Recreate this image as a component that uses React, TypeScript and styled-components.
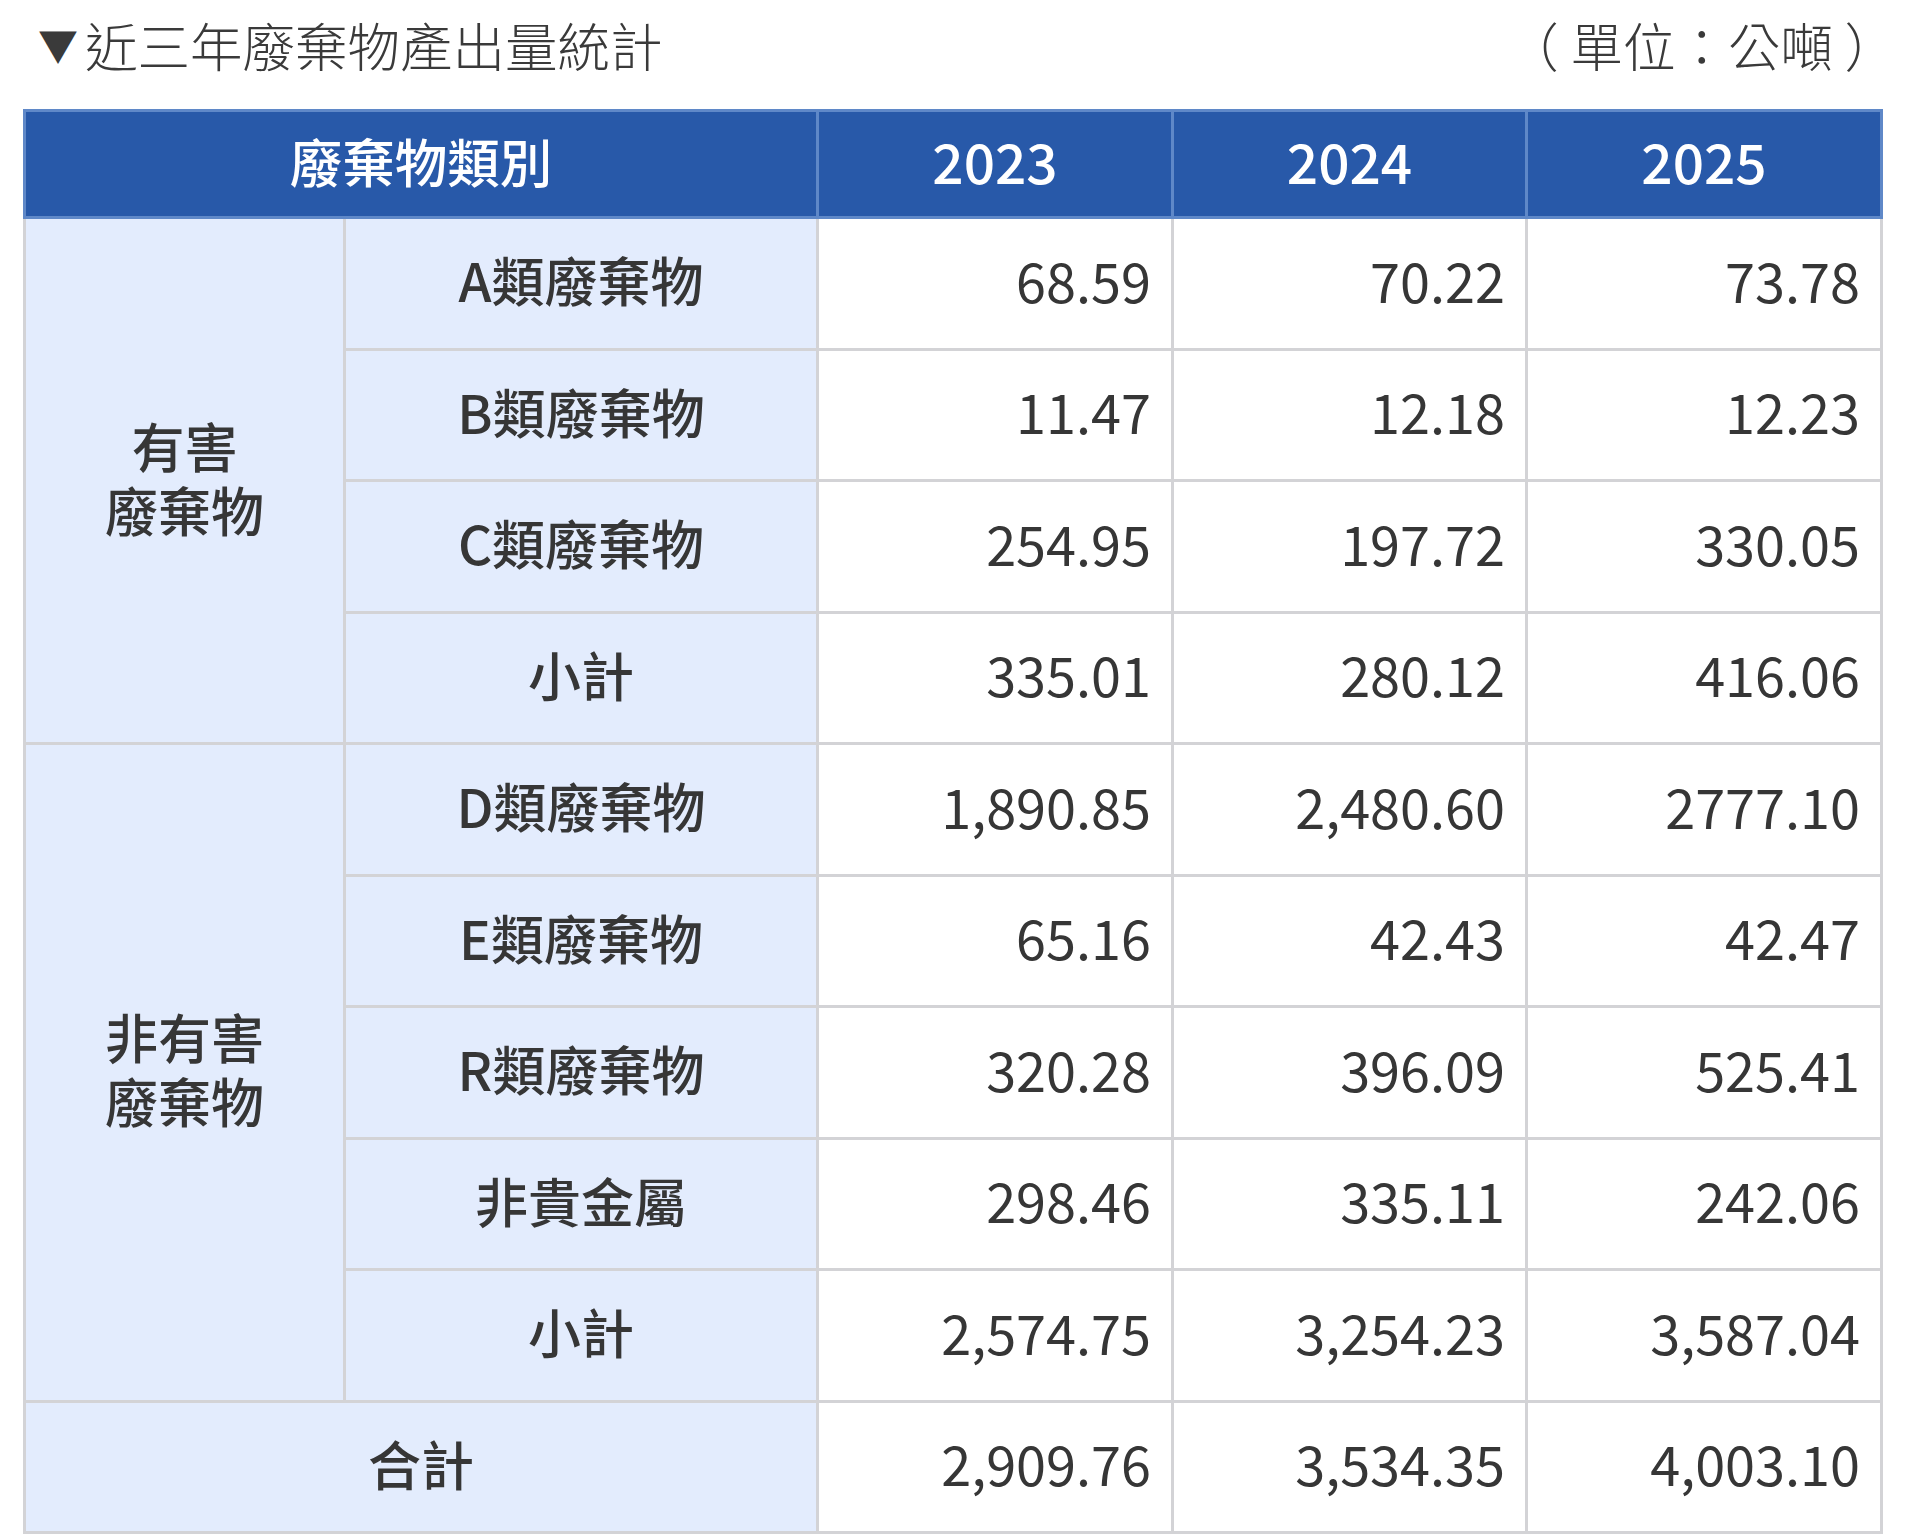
import React from "react";
import styled, { createGlobalStyle } from "styled-components";

const Global = createGlobalStyle`
  html, body { margin: 0; padding: 0; background: #ffffff; }
  body { font-family: "Noto Sans CJK TC", "Noto Sans", sans-serif; color: #333333; }
`;

const Page = styled.div`
  width: 1874px;
  padding-left: 23px;
`;

const TitleBar = styled.div`
  height: 88px;
  margin-bottom: 21px;
  display: flex;
  align-items: center;
  justify-content: space-between;
`;

const Title = styled.h2`
  margin: 0;
  padding-left: 15px;
  display: flex;
  align-items: center;
  font-size: 52.5px;
  font-weight: 300;
  color: #3a3a3a;
`;

const Triangle = styled.span`
  font-size: 40px;
  margin-right: 7px;
  color: #3a3a3a;
`;

const Unit = styled.span`
  font-size: 52.5px;
  font-weight: 300;
  color: #3a3a3a;
`;

const Table = styled.table`
  width: 1857px;
  table-layout: fixed;
  border-collapse: collapse;
  font-size: 52.5px;
`;

const HeadCell = styled.th<{ $num?: boolean }>`
  height: 96px;
  padding: 0 0 8px 0;
  background: #2859a9;
  border: 3px solid #5f88c8;
  color: #ffffff;
  font-size: ${(p) => (p.$num ? "55px" : "52.5px")};
  font-weight: 500;
  text-align: center;
  vertical-align: middle;
`;

const Row = styled.tr`
  height: 131.5px;
`;

const LabelCell = styled.td`
  padding: 0 0 8px 0;
  background: #e3ecfd;
  border: 3px solid #d3d3d6;
  color: #363636;
  font-size: 53px;
  font-weight: 500;
  text-align: center;
  vertical-align: middle;
  line-height: 64px;
`;

const NumCell = styled.td`
  padding: 0 20px 8px 0;
  background: #ffffff;
  border: 3px solid #d3d3d6;
  color: #363636;
  font-size: 54px;
  font-weight: 400;
  text-align: right;
  vertical-align: middle;
`;

type Item = { label: string; values: string[] };

const hazardous: Item[] = [
  { label: "A類廢棄物", values: ["68.59", "70.22", "73.78"] },
  { label: "B類廢棄物", values: ["11.47", "12.18", "12.23"] },
  { label: "C類廢棄物", values: ["254.95", "197.72", "330.05"] },
  { label: "小計", values: ["335.01", "280.12", "416.06"] },
];

const nonHazardous: Item[] = [
  { label: "D類廢棄物", values: ["1,890.85", "2,480.60", "2777.10"] },
  { label: "E類廢棄物", values: ["65.16", "42.43", "42.47"] },
  { label: "R類廢棄物", values: ["320.28", "396.09", "525.41"] },
  { label: "非貴金屬", values: ["298.46", "335.11", "242.06"] },
  { label: "小計", values: ["2,574.75", "3,254.23", "3,587.04"] },
];

const total = ["2,909.76", "3,534.35", "4,003.10"];

function Group({ name, items }: { name: React.ReactNode; items: Item[] }) {
  return (
    <>
      {items.map((it, i) => (
        <Row key={it.label + i}>
          {i === 0 && <LabelCell rowSpan={items.length}>{name}</LabelCell>}
          <LabelCell>{it.label}</LabelCell>
          {it.values.map((v, j) => (
            <NumCell key={j}>{v}</NumCell>
          ))}
        </Row>
      ))}
    </>
  );
}

export default function App() {
  return (
    <Page>
      <Global />
      <TitleBar>
        <Title>
          <Triangle>▼</Triangle>近三年廢棄物產出量統計
        </Title>
        <Unit>（ 單位：公噸 ）</Unit>
      </TitleBar>
      <Table>
        <colgroup>
          <col style={{ width: 320 }} />
          <col style={{ width: 473 }} />
          <col style={{ width: 355 }} />
          <col style={{ width: 354 }} />
          <col style={{ width: 355 }} />
        </colgroup>
        <thead>
          <tr>
            <HeadCell colSpan={2}>廢棄物類別</HeadCell>
            <HeadCell $num>2023</HeadCell>
            <HeadCell $num>2024</HeadCell>
            <HeadCell $num>2025</HeadCell>
          </tr>
        </thead>
        <tbody>
          <Group name={<>有害<br />廢棄物</>} items={hazardous} />
          <Group name={<>非有害<br />廢棄物</>} items={nonHazardous} />
          <Row>
            <LabelCell colSpan={2}>合計</LabelCell>
            {total.map((v, j) => (
              <NumCell key={j}>{v}</NumCell>
            ))}
          </Row>
        </tbody>
      </Table>
    </Page>
  );
}
